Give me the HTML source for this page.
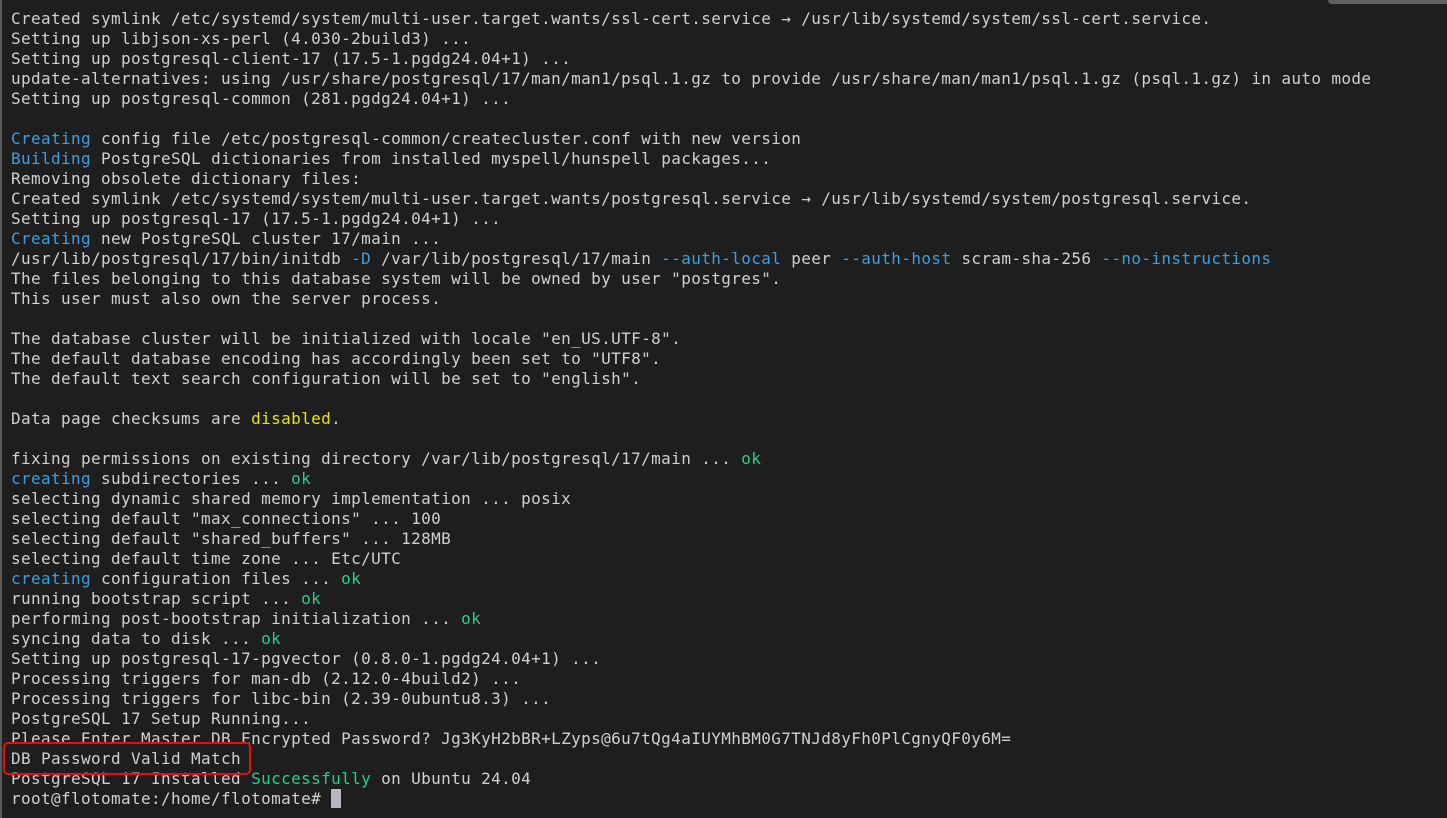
<!DOCTYPE html>
<html><head><meta charset="utf-8"><style>
html,body{margin:0;padding:0;}
body{width:1447px;height:818px;background:#1e1e1e;overflow:hidden;position:relative;}
.lb{position:absolute;left:0;top:0;width:2px;height:818px;background:#5a5a5a;}
.tb{position:absolute;left:1328px;top:0;width:119px;height:4px;background:#5f5f5f;border-bottom-left-radius:4px;}
pre{position:absolute;left:11px;top:9px;margin:0;font-family:"DejaVu Sans Mono","Liberation Mono",monospace;font-size:16px;letter-spacing:0.37px;line-height:20px;color:#d0d0d0;}
.b{color:#3b9fe0}.g{color:#23d18b}.y{color:#e5e510}
.cur{display:inline-block;width:10px;height:19px;background:#b8b8c0;vertical-align:-4px;}
.box{position:absolute;left:3px;top:742px;width:244px;height:29px;border:2px solid #e01010;border-radius:5px;}
</style></head><body>
<div class="lb"></div><div class="tb"></div>
<pre>Created symlink /etc/systemd/system/multi-user.target.wants/ssl-cert.service → /usr/lib/systemd/system/ssl-cert.service.
Setting up libjson-xs-perl (4.030-2build3) ...
Setting up postgresql-client-17 (17.5-1.pgdg24.04+1) ...
update-alternatives: using /usr/share/postgresql/17/man/man1/psql.1.gz to provide /usr/share/man/man1/psql.1.gz (psql.1.gz) in auto mode
Setting up postgresql-common (281.pgdg24.04+1) ...

<span class="b">Creating</span> config file /etc/postgresql-common/createcluster.conf with new version
<span class="b">Building</span> PostgreSQL dictionaries from installed myspell/hunspell packages...
Removing obsolete dictionary files:
Created symlink /etc/systemd/system/multi-user.target.wants/postgresql.service → /usr/lib/systemd/system/postgresql.service.
Setting up postgresql-17 (17.5-1.pgdg24.04+1) ...
<span class="b">Creating</span> new PostgreSQL cluster 17/main ...
/usr/lib/postgresql/17/bin/initdb <span class="b">-D</span> /var/lib/postgresql/17/main <span class="b">--auth-local</span> peer <span class="b">--auth-host</span> scram-sha-256 <span class="b">--no-instructions</span>
The files belonging to this database system will be owned by user "postgres".
This user must also own the server process.

The database cluster will be initialized with locale "en_US.UTF-8".
The default database encoding has accordingly been set to "UTF8".
The default text search configuration will be set to "english".

Data page checksums are <span class="y">disabled</span>.

fixing permissions on existing directory /var/lib/postgresql/17/main ... <span class="g">ok</span>
<span class="b">creating</span> subdirectories ... <span class="g">ok</span>
selecting dynamic shared memory implementation ... posix
selecting default "max_connections" ... 100
selecting default "shared_buffers" ... 128MB
selecting default time zone ... Etc/UTC
<span class="b">creating</span> configuration files ... <span class="g">ok</span>
running bootstrap script ... <span class="g">ok</span>
performing post-bootstrap initialization ... <span class="g">ok</span>
syncing data to disk ... <span class="g">ok</span>
Setting up postgresql-17-pgvector (0.8.0-1.pgdg24.04+1) ...
Processing triggers for man-db (2.12.0-4build2) ...
Processing triggers for libc-bin (2.39-0ubuntu8.3) ...
PostgreSQL 17 Setup Running...
Please Enter Master DB Encrypted Password? Jg3KyH2bBR+LZyps@6u7tQg4aIUYMhBM0G7TNJd8yFh0PlCgnyQF0y6M=
DB Password Valid Match
PostgreSQL 17 Installed <span class="g">Successfully</span> on Ubuntu 24.04
root@flotomate:/home/flotomate# <span class="cur"></span></pre>
<div class="box"></div>
</body></html>
